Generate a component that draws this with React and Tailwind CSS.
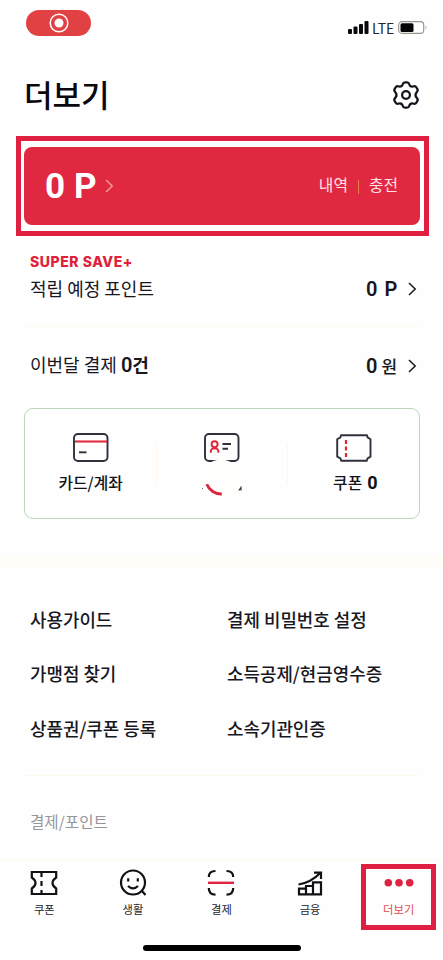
import React from "react";

const Chevron = ({ className }) => (
  <svg className={className} width="9" height="14" viewBox="0 0 9 14" fill="none" stroke="currentColor" strokeWidth="1.5">
    <path d="M1 1 L7.2 7 L1 13" />
  </svg>
);

const StatusBar = () => (
  <div className="flex h-[46px] shrink-0 items-start justify-between pl-[26px] pr-[15px] pt-[10px]">
    <div className="flex h-[26px] w-[65px] items-center justify-center rounded-full bg-[#e14143]">
      <svg width="20" height="20" viewBox="0 0 20 20">
        <circle cx="10" cy="10" r="8.8" fill="none" stroke="#fff" strokeWidth="1.5" />
        <circle cx="10" cy="10" r="4.5" fill="#fff" />
      </svg>
    </div>
    <div className="flex items-start pt-[11px]">
      <svg width="21" height="13" viewBox="0 0 21 13" fill="#08080f">
        <rect x="0" y="8" width="4" height="5" rx="1" />
        <rect x="5.5" y="5.5" width="4" height="7.5" rx="1" />
        <rect x="11" y="3" width="4" height="10" rx="1" />
        <rect x="16.5" y="0" width="4" height="13" rx="1" />
      </svg>
      <span className="ml-[3px] w-[26px] whitespace-nowrap text-[14px] leading-[14px] text-[#25252d]">LTE</span>
      <svg width="30" height="13" viewBox="0 0 30 13">
        <rect x="0.7" y="0.6" width="25" height="11.8" rx="3.2" fill="none" stroke="#99948c" strokeWidth="1.1" />
        <rect x="2.5" y="2.2" width="13" height="8.7" rx="1.5" fill="#050508" />
        <path d="M27.5 4.2 q2 2.3 0 4.6z" fill="#aaa" />
      </svg>
    </div>
  </div>
);

const Gear = () => (
  <svg width="28" height="28" viewBox="0 0 28 28" fill="none" stroke="#11111a" strokeWidth="2.2" strokeLinejoin="round">
    <path d="M10.7 3.3 Q11.3 1.3 13 1.3 H15 Q16.7 1.3 17.3 3.3 Q18.2 6 21 5.5 Q23.4 4.7 24.3 6.2 L25.4 8.1 Q26.3 9.7 24.7 11.1 Q22.3 14 24.7 16.9 Q26.3 18.3 25.4 19.9 L24.3 21.8 Q23.4 23.3 21 22.5 Q18.2 22 17.3 24.7 Q16.7 26.7 15 26.7 H13 Q11.3 26.7 10.7 24.7 Q9.8 22 7 22.5 Q4.6 23.3 3.7 21.8 L2.6 19.9 Q1.7 18.3 3.3 16.9 Q5.7 14 3.3 11.1 Q1.7 9.7 2.6 8.1 L3.7 6.2 Q4.6 4.7 7 5.5 Q9.8 6 10.7 3.3Z" />
    <circle cx="14" cy="14" r="3.9" />
  </svg>
);

const PointCard = () => (
  <section className="ml-[16px] h-[100px] w-[413px] shrink-0 border-5 border-[#df2041] bg-white pl-[3px] pr-[4px] pt-[6px]">
    <div className="flex h-[78px] items-center rounded-[8px] bg-[#e12841] pl-[21px] pr-[22px] text-white">
      <span className="flex w-[60px] gap-[9px] whitespace-nowrap font-['Roboto'] text-[35px] leading-none font-bold"><span>0</span><span>P</span></span>
      <Chevron className="text-[#f09a90]" />
      <div className="ml-auto flex items-center pb-[2px] text-[15.8px] leading-none text-[#ffe0e8]">
        <span>내역</span>
        <span className="mx-[10px] mt-[3px] h-[14px] w-px bg-[#f07b50]" />
        <span>충전</span>
      </div>
    </div>
  </section>
);

const CardIcon = () => (
  <svg width="36" height="30" viewBox="0 0 36 30" fill="none" stroke="#332f3d" strokeWidth="1.9">
    <rect x="1" y="1" width="33.5" height="27" rx="4" />
    <path d="M2 8.5H34" stroke="#e22c3c" strokeWidth="2.1" />
    <path d="M6 19.3H13.5" />
  </svg>
);

const MemberIcon = () => (
  <svg width="36" height="30" viewBox="0 0 36 30" fill="none" stroke="#332f3d" strokeWidth="1.9">
    <rect x="1" y="1" width="33.5" height="27" rx="4" />
    <circle cx="10.6" cy="11.2" r="3" stroke="#df2638" />
    <path d="M6.8 19.8V18.8Q6.8 15.4 10.6 15.4Q14.4 15.4 14.4 18.8V19.8" stroke="#df2638" />
    <path d="M18.5 11H27M18.5 15.8H24" />
  </svg>
);

const CouponIcon = () => (
  <svg width="36" height="30" viewBox="0 0 36 30" fill="none" stroke="#332f3d" strokeWidth="1.9">
    <path d="M5 2.2H31L31.6 4.4L34.5 6.3V23.7L31.6 25.3L30.8 27.8H5.2L4.4 25.3L1.2 23.7V6.3L4.4 4.4Z" strokeLinejoin="round" />
    <path d="M10 7V24" stroke="#dd2438" strokeWidth="2.2" strokeDasharray="4 2.5" />
  </svg>
);

const QuickMenu = () => (
  <section className="relative mx-[24px] grid h-[111px] w-[396px] shrink-0 grid-cols-3 rounded-[9px] border border-[#b9d8b5] text-[15.8px] font-medium text-[#121217]">
    <div className="flex flex-col items-center pt-[24px]">
      <CardIcon />
      <span className="mt-[8px] leading-[24px]">카드/계좌</span>
    </div>
    <div className="my-[34px] flex justify-center border-x border-[#fff5ed]">
      <div className="-mt-[10px]"><MemberIcon /></div>
    </div>
    <div className="flex flex-col items-center pl-[2px] pt-[24px]">
      <CouponIcon />
      <span className="mt-[8px] flex items-center gap-[5px] pl-[2px] leading-[24px]">쿠폰 <b className="font-['Roboto'] text-[18px] leading-none font-bold">0</b></span>
    </div>
    <svg className="absolute left-[173px] top-[48px]" width="46" height="46" viewBox="0 0 46 46">
      <circle cx="23" cy="22.5" r="20" fill="#fffefc" />
      <path d="M8.8 27.2 A15.5 15.5 0 0 0 23.8 37" fill="none" stroke="#dd2340" strokeWidth="2.8" />
      <path d="M4 31.5h1" stroke="#667064" />
      <path d="M43 29.5 L43 33.5 M40.8 33.5 L42.6 31" stroke="#33333a" strokeWidth="1.2" />
    </svg>
  </section>
);

const links = [
  ["사용가이드", "결제 비밀번호 설정"],
  ["가맹점 찾기", "소득공제/현금영수증"],
  ["상품권/쿠폰 등록", "소속기관인증"],
];

const navSvg = { width: 30, height: 30, viewBox: "0 0 30 30", fill: "none", stroke: "#111116", strokeWidth: 2.2 };

const tabs = [
  {
    label: "쿠폰",
    icon: (
      <svg {...navSvg}>
        <path d="M2.8 4H27.2V9.5Q23.5 12 23.5 15Q23.5 18 27.2 20.5V26H2.8V20.5Q6.5 18 6.5 15Q6.5 12 2.8 9.5Z" />
        <path d="M12.5 4V26" strokeDasharray="5 4" />
      </svg>
    ),
  },
  {
    label: "생활",
    icon: (
      <svg {...navSvg}>
        <circle cx="15" cy="14.5" r="12" />
        <path d="M23.5 22.5L27.5 27M10.2 10.2V13.4M19.8 10.2V13.4M10 18Q15 22.8 20 18" />
      </svg>
    ),
  },
  {
    label: "결제",
    icon: (
      <svg {...navSvg}>
        <path d="M2.8 9Q2.8 3 9.5 3M20.5 3Q27.2 3 27.2 9M2.8 20Q2.8 26.7 9.5 26.7M20.5 26.7Q27.2 26.7 27.2 20" />
        <path d="M2 14.8H28" stroke="#e12540" strokeWidth="2.4" />
      </svg>
    ),
  },
  {
    label: "금융",
    icon: (
      <svg {...navSvg}>
        <path d="M4 26.3V20.6H11V26.3ZM11 26.3V18H18V26.3ZM18 26.3V14.3H26V26.3ZM3.5 16.5Q16 14.5 25.2 5" />
        <path d="M19 4.6H26V11" />
      </svg>
    ),
  },
  {
    label: "더보기",
    active: true,
    icon: (
      <svg {...navSvg} fill="#df2342" stroke="none">
        <circle cx="4.3" cy="14.8" r="3.8" />
        <circle cx="15" cy="14.8" r="3.8" />
        <circle cx="25.7" cy="14.8" r="3.8" />
      </svg>
    ),
  },
];

const TabBar = () => (
  <nav className="relative grid h-[100px] shrink-0 grid-cols-5 border-t border-[#fff9ed] text-[11.3px] text-[#25252c]">
    {tabs.map((t) => (
      <div key={t.label} className="flex flex-col items-center pt-[7px]">
        {t.icon}
        <span className={t.active ? "mt-[2px] leading-[18px] text-[#e04a50]" : "mt-[2px] leading-[18px]"}>{t.label}</span>
      </div>
    ))}
    <div className="absolute left-[361px] top-[3px] h-[66px] w-[75px] border-5 border-[#df2041]" />
    <div className="absolute left-[143px] top-[84px] h-[6px] w-[158px] rounded-full bg-black" />
  </nav>
);

export default function App() {
  return (
    <main className="flex h-[960px] w-[443px] flex-col overflow-hidden bg-[#fefefe] font-['Noto_Sans_CJK_KR',sans-serif] text-[#17171f]">
      <StatusBar />
      <header className="flex h-[90px] shrink-0 items-center justify-between pl-[24px] pr-[23px] pt-[8px]">
        <h1 className="pb-[2px] text-[31px] leading-[46px] font-medium text-[#08080e]">더보기</h1>
        <Gear />
      </header>
      <PointCard />
      <section className="mx-[24px] flex h-[91px] w-[396px] shrink-0 items-start justify-between border-b border-[#fff8ed] pl-[6px] pr-[3px] pt-[17px]">
        <div>
          <div className="font-['Inter'] text-[14px] leading-[17px] font-extrabold tracking-[0.55px] text-[#df2139]">SUPER SAVE+</div>
          <div className="mt-[5px] text-[18px] leading-[26px]">적립 예정 포인트</div>
        </div>
        <div className="mt-[23px] flex items-center">
          <span className="flex w-[42px] gap-[7px] whitespace-nowrap font-['Roboto'] text-[20px] leading-[26px] font-semibold"><span>0</span><span>P</span></span>
          <Chevron />
        </div>
      </section>
      <section className="mx-[24px] flex h-[81px] w-[396px] shrink-0 items-center justify-between pl-[6px] pr-[3px] pb-[6px]">
        <span className="text-[18px]">이번달 결제 <b className="font-['Roboto','Noto_Sans_CJK_KR',sans-serif] text-[18px] font-semibold"><span className="text-[20px]">0</span>건</b></span>
        <div className="flex items-center pt-[2px]">
          <span className="flex w-[42px] items-center gap-[4px] whitespace-nowrap text-[17px] leading-[26px] font-medium"><b className="font-['Roboto'] text-[20px] font-semibold">0</b><span>원</span></span>
          <Chevron />
        </div>
      </section>
      <QuickMenu />
      <div className="mt-[36px] h-[12px] shrink-0 bg-[#fffdf8]" />
      <section className="mx-[24px] flex h-[209px] w-[396px] shrink-0 flex-col border-b border-[#fff9ed] pl-[6px] pt-[25px] text-[17.9px] font-medium">
        {links.map(([a, b]) => (
          <div key={a} className="grid h-[54.5px] grid-cols-[197px_1fr] items-center whitespace-nowrap">
            <span>{a}</span>
            <span>{b}</span>
          </div>
        ))}
      </section>
      <div className="h-[84px] shrink-0 pl-[30px] pt-[32px] text-[15.6px] leading-[26px] text-[#96969a]">결제/포인트</div>
      <TabBar />
    </main>
  );
}
